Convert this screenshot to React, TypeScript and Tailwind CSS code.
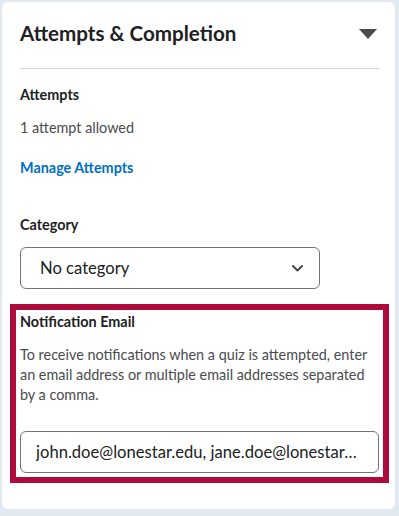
export default function App() {
  return (
    <div
      className="h-[516px] w-[399px] bg-[#e3e9f1] pl-[2px] pr-[4px] pt-[2px] text-[#202122]"
      style={{ fontFamily: 'Lato, "Noto Sans", sans-serif' }}
    >
      <div className="h-[507px] rounded-md bg-white pl-[18px] pr-[16px]">
        {/* Header */}
        <div className="flex items-center justify-between pt-[17px]">
          <h2 className="text-[20.6px] font-bold leading-[28px]">Attempts &amp; Completion</h2>
          <svg width="18" height="10" viewBox="0 0 18 10" className="mr-[2px] mt-[2px]">
            <path d="M0 0 H18 L9 10 Z" fill="#494c4e" />
          </svg>
        </div>
        <div className="mt-[21px] h-px bg-[#cdd5dc]" />

        {/* Attempts */}
        <div className="mt-[16px] text-[14.4px] font-bold leading-[20px]">Attempts</div>
        <div className="mt-[13px] text-[14.4px] leading-[20px] text-[#494c4e]">1 attempt allowed</div>
        <div className="mt-[20px] text-[14.4px] font-bold leading-[20px] text-[#006fbf]">Manage Attempts</div>

        {/* Category */}
        <div className="mt-[37px] text-[14.4px] font-bold leading-[20px]">Category</div>
        <div className="mt-[12px] flex h-[42px] w-[300px] items-center justify-between rounded-md border border-[#6e7477] pl-[19px] pr-[16px]">
          <span className="text-[16.6px] leading-[20px]">No category</span>
          <svg width="11" height="7" viewBox="0 0 11 7" fill="none">
            <path d="M1 1 L5.5 5.5 L10 1" stroke="#494c4e" strokeWidth="2" strokeLinecap="round" strokeLinejoin="round" />
          </svg>
        </div>

        {/* Notification Email */}
        <div className="-mx-[10px] mt-[15px] border-[6px] border-[#ae0a3c] px-[4px] pb-[4px] pt-[2px]">
          <div className="text-[14.4px] font-bold leading-[20px]">Notification Email</div>
          <p className="mt-[13px] text-[14.4px] leading-[20px] text-[#494c4e]">
            To receive notifications when a quiz is attempted, enter an email address or multiple email addresses
            separated by a comma.
          </p>
          <div className="mt-[26px] flex h-[42px] items-center rounded-md border border-[#6e7477] pl-[15px] pr-[19px]">
            <span className="truncate text-[16.6px] leading-[20px]">
              john.doe@lonestar.edu, jane.doe@lonestar.edu
            </span>
          </div>
        </div>
      </div>
    </div>
  );
}
